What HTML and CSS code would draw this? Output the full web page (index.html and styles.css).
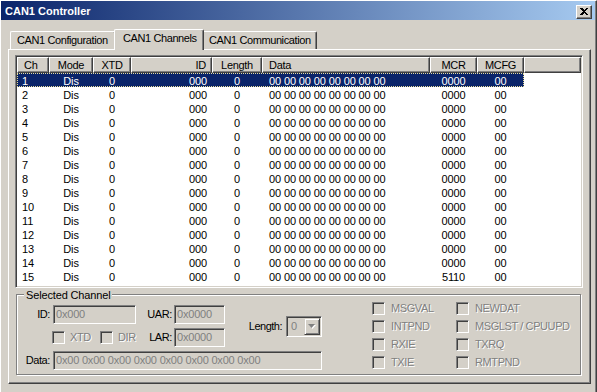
FILE: index.html
```html
<!DOCTYPE html>
<html>
<head>
<meta charset="utf-8">
<link rel="stylesheet" href="styles.css">
</head>
<body>
<div class="window">
  <div class="titlebar">
    <span class="title">CAN1 Controller</span>
    <span class="close"><svg width="8" height="7" viewBox="0 0 8 7"><path d="M0 0H2L4 2L6 0H8L5 3.5L8 7H6L4 5L2 7H0L3 3.5Z" fill="#000"/></svg></span>
  </div>
  <div class="client">
    <div class="tabs">
      <div class="tab t-config">CAN1 Configuration</div>
      <div class="tab active t-chan">CAN1 Channels</div>
      <div class="tab t-comm">CAN1 Communication</div>
    </div>
    <div class="panel">
      <div class="list">
        <div class="hdr">
          <div class="hc w-ch al-l">Ch</div>
          <div class="hc w-mode">Mode</div>
          <div class="hc w-xtd">XTD</div>
          <div class="hc w-id al-r">ID</div>
          <div class="hc w-len">Length</div>
          <div class="hc w-data al-l">Data</div>
          <div class="hc w-mcr">MCR</div>
          <div class="hc w-mcfg">MCFG</div>
          <div class="hc w-fill"></div>
        </div>
        <div class="row sel"><span class="c w-ch al-l">1</span><span class="c w-mode">Dis</span><span class="c w-xtd">0</span><span class="c w-id al-r">000</span><span class="c w-len">0</span><span class="c w-data al-l">00 00 00 00 00 00 00 00</span><span class="c w-mcr">0000</span><span class="c w-mcfg">00</span></div>
        <div class="row"><span class="c w-ch al-l">2</span><span class="c w-mode">Dis</span><span class="c w-xtd">0</span><span class="c w-id al-r">000</span><span class="c w-len">0</span><span class="c w-data al-l">00 00 00 00 00 00 00 00</span><span class="c w-mcr">0000</span><span class="c w-mcfg">00</span></div>
        <div class="row"><span class="c w-ch al-l">3</span><span class="c w-mode">Dis</span><span class="c w-xtd">0</span><span class="c w-id al-r">000</span><span class="c w-len">0</span><span class="c w-data al-l">00 00 00 00 00 00 00 00</span><span class="c w-mcr">0000</span><span class="c w-mcfg">00</span></div>
        <div class="row"><span class="c w-ch al-l">4</span><span class="c w-mode">Dis</span><span class="c w-xtd">0</span><span class="c w-id al-r">000</span><span class="c w-len">0</span><span class="c w-data al-l">00 00 00 00 00 00 00 00</span><span class="c w-mcr">0000</span><span class="c w-mcfg">00</span></div>
        <div class="row"><span class="c w-ch al-l">5</span><span class="c w-mode">Dis</span><span class="c w-xtd">0</span><span class="c w-id al-r">000</span><span class="c w-len">0</span><span class="c w-data al-l">00 00 00 00 00 00 00 00</span><span class="c w-mcr">0000</span><span class="c w-mcfg">00</span></div>
        <div class="row"><span class="c w-ch al-l">6</span><span class="c w-mode">Dis</span><span class="c w-xtd">0</span><span class="c w-id al-r">000</span><span class="c w-len">0</span><span class="c w-data al-l">00 00 00 00 00 00 00 00</span><span class="c w-mcr">0000</span><span class="c w-mcfg">00</span></div>
        <div class="row"><span class="c w-ch al-l">7</span><span class="c w-mode">Dis</span><span class="c w-xtd">0</span><span class="c w-id al-r">000</span><span class="c w-len">0</span><span class="c w-data al-l">00 00 00 00 00 00 00 00</span><span class="c w-mcr">0000</span><span class="c w-mcfg">00</span></div>
        <div class="row"><span class="c w-ch al-l">8</span><span class="c w-mode">Dis</span><span class="c w-xtd">0</span><span class="c w-id al-r">000</span><span class="c w-len">0</span><span class="c w-data al-l">00 00 00 00 00 00 00 00</span><span class="c w-mcr">0000</span><span class="c w-mcfg">00</span></div>
        <div class="row"><span class="c w-ch al-l">9</span><span class="c w-mode">Dis</span><span class="c w-xtd">0</span><span class="c w-id al-r">000</span><span class="c w-len">0</span><span class="c w-data al-l">00 00 00 00 00 00 00 00</span><span class="c w-mcr">0000</span><span class="c w-mcfg">00</span></div>
        <div class="row"><span class="c w-ch al-l">10</span><span class="c w-mode">Dis</span><span class="c w-xtd">0</span><span class="c w-id al-r">000</span><span class="c w-len">0</span><span class="c w-data al-l">00 00 00 00 00 00 00 00</span><span class="c w-mcr">0000</span><span class="c w-mcfg">00</span></div>
        <div class="row"><span class="c w-ch al-l">11</span><span class="c w-mode">Dis</span><span class="c w-xtd">0</span><span class="c w-id al-r">000</span><span class="c w-len">0</span><span class="c w-data al-l">00 00 00 00 00 00 00 00</span><span class="c w-mcr">0000</span><span class="c w-mcfg">00</span></div>
        <div class="row"><span class="c w-ch al-l">12</span><span class="c w-mode">Dis</span><span class="c w-xtd">0</span><span class="c w-id al-r">000</span><span class="c w-len">0</span><span class="c w-data al-l">00 00 00 00 00 00 00 00</span><span class="c w-mcr">0000</span><span class="c w-mcfg">00</span></div>
        <div class="row"><span class="c w-ch al-l">13</span><span class="c w-mode">Dis</span><span class="c w-xtd">0</span><span class="c w-id al-r">000</span><span class="c w-len">0</span><span class="c w-data al-l">00 00 00 00 00 00 00 00</span><span class="c w-mcr">0000</span><span class="c w-mcfg">00</span></div>
        <div class="row"><span class="c w-ch al-l">14</span><span class="c w-mode">Dis</span><span class="c w-xtd">0</span><span class="c w-id al-r">000</span><span class="c w-len">0</span><span class="c w-data al-l">00 00 00 00 00 00 00 00</span><span class="c w-mcr">0000</span><span class="c w-mcfg">00</span></div>
        <div class="row"><span class="c w-ch al-l">15</span><span class="c w-mode">Dis</span><span class="c w-xtd">0</span><span class="c w-id al-r">000</span><span class="c w-len">0</span><span class="c w-data al-l">00 00 00 00 00 00 00 00</span><span class="c w-mcr">5110</span><span class="c w-mcfg">00</span></div>
      </div>
      <div class="group">
        <div class="legend">Selected Channel</div>
        <div class="group-body">
          <div class="fields">
            <div class="lbl r1 c1">ID:</div>
            <div class="edit r1 c2">0x000</div>
            <div class="lbl lbl2 r1 c3">UAR:</div>
            <div class="edit r1 c4">0x0000</div>
            <div class="lbl len-lbl">Length:</div>
            <div class="combo"><span class="combo-val">0</span><span class="combo-btn"><svg width="9" height="6" viewBox="0 0 9 6"><path d="M1 1H8L4.5 5Z" fill="#fff"/><path d="M0 0H7L3.5 4Z" fill="#808080"/></svg></span></div>
            <div class="checks-row r2 c2">
              <div class="chk chk-xtd"><span class="box"></span><span class="dis">XTD</span></div>
              <div class="chk"><span class="box"></span><span class="dis">DIR</span></div>
            </div>
            <div class="lbl lbl2 r2 c3">LAR:</div>
            <div class="edit r2 c4">0x0000</div>
            <div class="lbl r3 c1">Data:</div>
            <div class="edit edit-data r3">0x00 0x00 0x00 0x00 0x00 0x00 0x00 0x00</div>
          </div>
          <div class="flags">
            <div class="chk"><span class="box"></span><span class="dis">MSGVAL</span></div>
            <div class="chk"><span class="box"></span><span class="dis">NEWDAT</span></div>
            <div class="chk"><span class="box"></span><span class="dis">INTPND</span></div>
            <div class="chk"><span class="box"></span><span class="dis">MSGLST / CPUUPD</span></div>
            <div class="chk"><span class="box"></span><span class="dis">RXIE</span></div>
            <div class="chk"><span class="box"></span><span class="dis">TXRQ</span></div>
            <div class="chk"><span class="box"></span><span class="dis">TXIE</span></div>
            <div class="chk"><span class="box"></span><span class="dis">RMTPND</span></div>
          </div>
        </div>
      </div>
    </div>
  </div>
</div>
</body>
</html>
```

FILE: styles.css
```css
* { box-sizing: border-box; }
html, body { margin: 0; padding: 0; background: #d4d0c8; }
body {
  font-family: "Liberation Sans", Arial, sans-serif;
  font-size: 11px;
  color: #000;
  letter-spacing: -0.4px;
  overflow: hidden;
}
.window {
  width: 597px;
  height: 392px;
  background: #d4d0c8;
  border-top: 1px solid #fff;
  border-left: 1px solid #fff;
  border-right: 1px solid #404040;
  padding-right: 1px;
  box-shadow: inset -1px 0 0 #808080;
  overflow: hidden;
}
.titlebar {
  height: 19px;
  display: flex;
  align-items: flex-start;
  justify-content: space-between;
  background: linear-gradient(to right, #0a246a, #a6caf0);
}
.title {
  color: #fff;
  font-weight: bold;
  letter-spacing: 0;
  line-height: 17px;
  padding: 2px 0 0 4px;
}
.close {
  width: 16px;
  height: 14px;
  margin: 4px 3px 0 0;
  background: #d4d0c8;
  border-top: 1px solid #fff;
  border-left: 1px solid #fff;
  border-right: 1px solid #404040;
  border-bottom: 1px solid #404040;
  box-shadow: inset -1px -1px 0 #808080;
  display: flex;
  align-items: center;
  justify-content: center;
  padding: 0 1px 1px 0;
}
.close svg { display: block; shape-rendering: crispEdges; }
.client { padding: 9px 4px 0 7px; }
.tabs {
  height: 20px;
  display: flex;
  align-items: flex-end;
  padding-left: 2px;
}
.tab {
  height: 18px;
  border-top: 1px solid #fff;
  border-left: 1px solid #fff;
  border-right: 1px solid #404040;
  box-shadow: inset -1px 0 0 #808080;
  border-radius: 2px 2px 0 0;
  padding: 2px 6px 0;
  line-height: 13px;
  white-space: nowrap;
  background: #d4d0c8;
}
.t-config { width: 106px; }
.t-chan { width: 90px; }
.t-comm { width: 115px; }
.tab.active {
  height: 21px;
  margin: 0 -2px -1px;
  padding: 2px 8px 0;
  position: relative;
  z-index: 1;
}
.panel {
  width: 583px;
  height: 335px;
  border: 1px solid;
  border-color: #fff #404040 #404040 #fff;
  box-shadow: inset -1px -1px 0 #808080;
  padding: 5px 0 0 6px;
}
.list {
  width: 568px;
  height: 233px;
  background: #fff;
  border: 1px solid;
  border-color: #808080 #fff #fff #808080;
  box-shadow: inset 1px 1px 0 #404040, inset -1px -1px 0 #d4d0c8;
  padding: 1px;
  letter-spacing: -0.12px;
}
.hdr { display: flex; height: 16px; }
.hc {
  height: 16px;
  background: #d4d0c8;
  border-top: 1px solid #fff;
  border-left: 1px solid #fff;
  border-right: 1px solid #404040;
  border-bottom: 1px solid #404040;
  box-shadow: inset -1px -1px 0 #808080;
  padding-top: 0;
  line-height: 14px;
  text-align: center;
  white-space: nowrap;
  letter-spacing: -0.3px;
}
.hc.al-l { text-align: left; padding-left: 6px; }
.hc.al-r { text-align: right; padding-right: 5px; }
.w-ch { width: 32px; }
.w-mode { width: 44px; }
.w-xtd { width: 38px; }
.w-id { width: 81px; }
.w-len { width: 50px; }
.w-data { width: 168px; }
.w-mcr { width: 47px; }
.w-mcfg { width: 47px; }
.w-fill { flex: 1; }
.row {
  display: flex;
  width: 507px;
  height: 14px;
  line-height: 14px;
  padding-top: 1px;
  white-space: nowrap;
}
.row .c { display: block; text-align: center; }
.row .c.al-l { text-align: left; padding-left: 5px; }
.row .c.w-data { padding-left: 7px; }
.row .c.al-r { text-align: right; padding-right: 5px; }
.row.sel {
  background: #0a246a;
  color: #fff;
  outline: 1px dotted #e6dc9a;
  outline-offset: -1px;
}
.group {
  width: 565px;
  height: 81px;
  margin: 6px 0 0 1px;
  border: 1px solid #808080;
  box-shadow: inset 1px 1px 0 #fff, 1px 1px 0 #fff;
}
.legend {
  width: fit-content;
  height: 13px;
  line-height: 13px;
  margin: -6px 0 -7px 7px;
  padding: 0 2px;
  background: #d4d0c8;
  letter-spacing: -0.15px;
  position: relative;
}
.group-body { display: flex; align-items: flex-start; }
.fields {
  margin-top: 10px;
  display: grid;
  grid-template-columns: 36px 83px 38px 51px 61px 36px;
  grid-template-rows: 19px 19px 19px;
  row-gap: 4px;
}
.r1 { grid-row: 1; }
.r2 { grid-row: 2; }
.r3 { grid-row: 3; }
.c1 { grid-column: 1; }
.c2 { grid-column: 2; }
.c3 { grid-column: 3; }
.c4 { grid-column: 4; }
.lbl {
  line-height: 19px;
  text-align: right;
  padding-right: 3px;
  white-space: nowrap;
}
.lbl2 { padding-right: 2px; }
.len-lbl {
  grid-column: 5;
  grid-row: 1 / 3;
  align-self: center;
  padding-right: 4px;
  letter-spacing: -0.5px;
}
.edit {
  height: 19px;
  border: 1px solid;
  border-color: #808080 #fff #fff #808080;
  box-shadow: inset 1px 1px 0 #404040, inset -1px -1px 0 #d4d0c8;
  color: #808080;
  padding-left: 2px;
  line-height: 17px;
  white-space: nowrap;
  overflow: hidden;
  letter-spacing: -0.2px;
}
.edit-data { grid-column: 2 / 7; }
.combo {
  grid-column: 6;
  grid-row: 1 / 3;
  align-self: center;
  height: 21px;
  border: 1px solid;
  border-color: #808080 #fff #fff #808080;
  box-shadow: inset 1px 1px 0 #404040, inset -1px -1px 0 #d4d0c8;
  padding: 1px;
  display: flex;
  justify-content: space-between;
}
.combo-val {
  color: #808080;
  padding-left: 3px;
  line-height: 17px;
}
.combo-btn {
  width: 16px;
  height: 17px;
  border: 1px solid;
  border-color: #d4d0c8 #404040 #404040 #d4d0c8;
  box-shadow: inset 1px 1px 0 #fff, inset -1px -1px 0 #808080;
  display: flex;
  align-items: center;
  justify-content: center;
  padding: 1px 0 0 1px;
}
.combo-btn svg { display: block; }
.checks-row {
  display: flex;
  align-items: center;
  margin-left: -1px;
  white-space: nowrap;
}
.chk {
  display: flex;
  align-items: center;
  gap: 6px;
  height: 13px;
  white-space: nowrap;
}
.chk-xtd { width: 48px; flex: none; }
.checks-row .chk { gap: 5px; }
.box {
  width: 13px;
  height: 13px;
  flex: none;
  border: 1px solid;
  border-color: #808080 #fff #fff #808080;
  box-shadow: inset 1px 1px 0 #404040, inset -1px -1px 0 #d4d0c8;
  background: #d4d0c8;
}
.dis {
  color: #808080;
  text-shadow: 1px 1px 0 #fff;
  line-height: 13px;
}
.flags {
  margin: 7px 0 0 50px;
  display: grid;
  grid-template-columns: 84px auto;
  grid-auto-rows: 13px;
  row-gap: 5px;
}
```
